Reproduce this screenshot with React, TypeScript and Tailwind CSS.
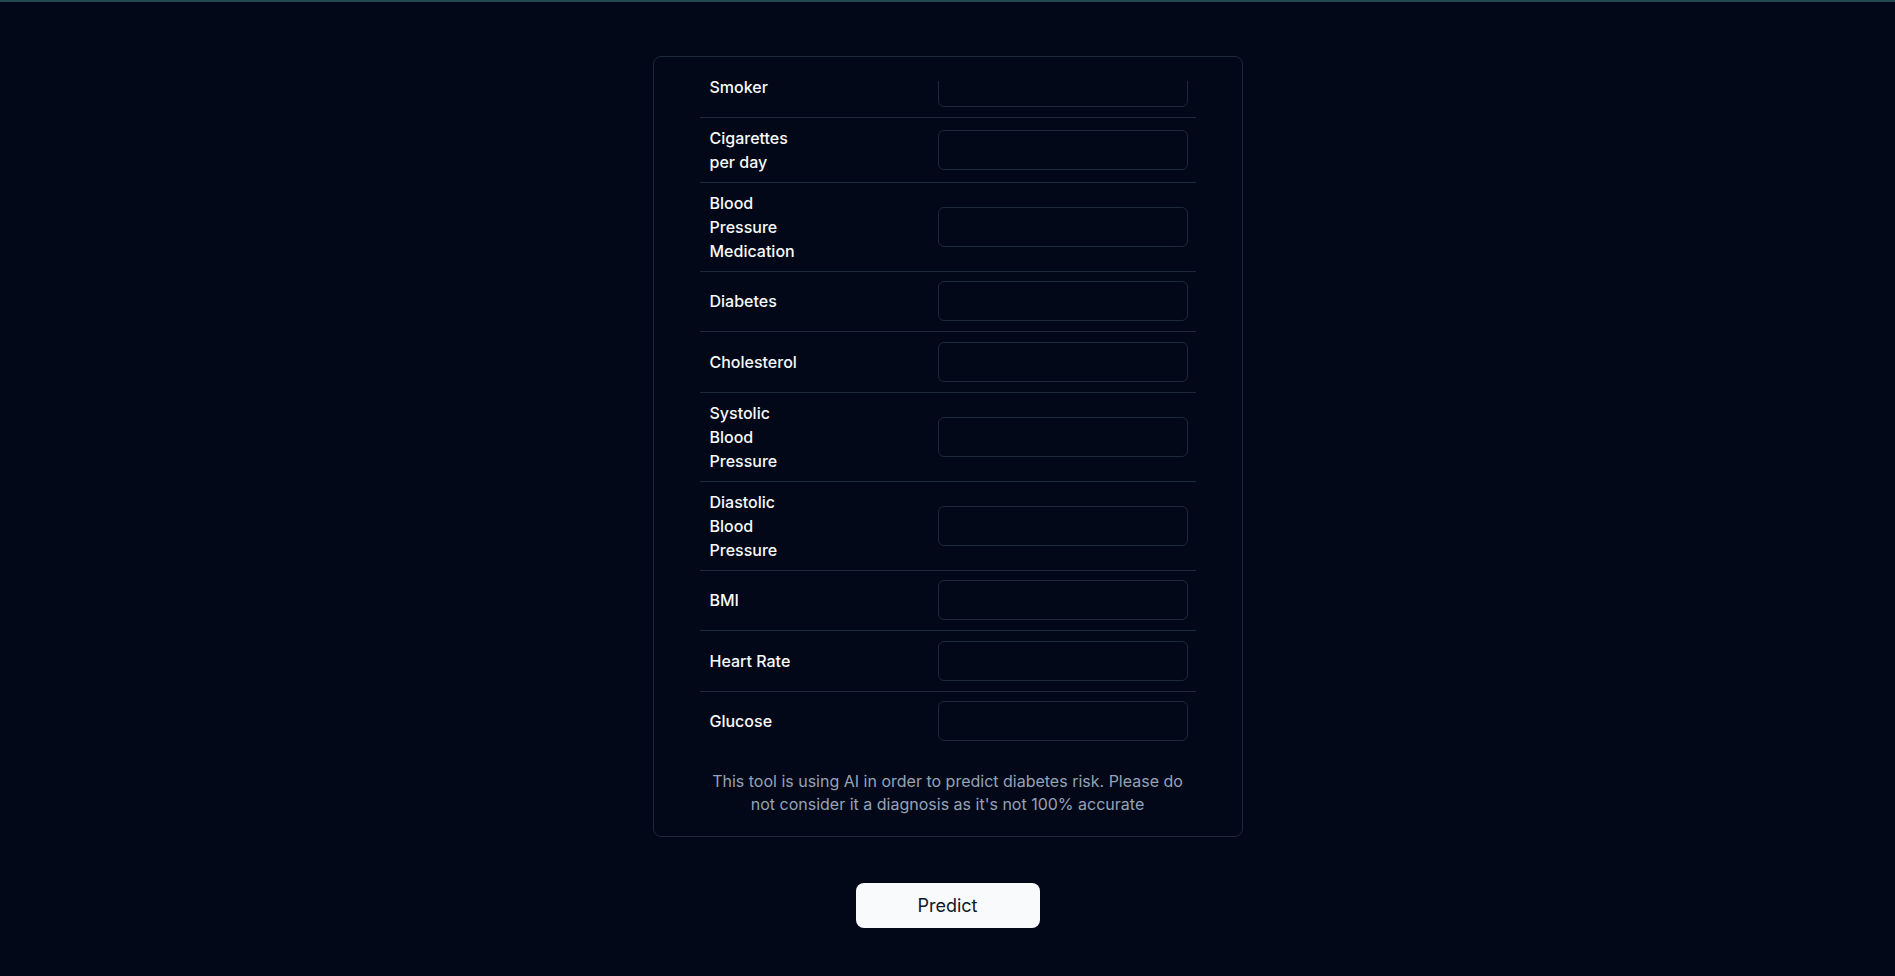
import { useEffect, useRef } from "react";

const fields = [
    { name: "currentSmoker", label: "Smoker" },
    { name: "cigsPerDay", label: "Cigarettes per day" },
    { name: "BPMeds", label: "Blood Pressure Medication" },
    { name: "diabetes", label: "Diabetes" },
    { name: "totChol", label: "Cholesterol" },
    { name: "sysBP", label: "Systolic Blood Pressure" },
    { name: "diaBP", label: "Diastolic Blood Pressure" },
    { name: "BMI", label: "BMI" },
    { name: "heartRate", label: "Heart Rate" },
    { name: "glucose", label: "Glucose" },
];

export default function App() {
    const scrollRef = useRef<HTMLDivElement>(null);

    // Form list is scrolled down to the last field
    useEffect(() => {
        if (scrollRef.current) {
            scrollRef.current.scrollTop = scrollRef.current.scrollHeight;
        }
    }, []);

    return (
        <div className="min-h-screen bg-[#020817] font-['Inter',sans-serif] text-[#f8fafc]">
            <div className="h-[2px] bg-[#234a50]" />

            <main className="flex flex-col items-center pt-[54px] pb-12">
                {/* Form card */}
                <div className="w-[590px] rounded-lg border border-[#1e293b] px-[46px] pt-6 pb-5">
                    <div ref={scrollRef} className="relative h-[670px] overflow-hidden">
                        {fields.map((field) => (
                            <div
                                key={field.name}
                                className="grid grid-cols-[230px_1fr] items-center border-b border-[#1e293b] last:border-b-0"
                            >
                                <div className="py-2 pr-2 pl-[10px]">
                                    <label
                                        htmlFor={field.name}
                                        className="block max-w-[100px] text-base font-medium leading-6 text-[#f8fafc]"
                                    >
                                        {field.label}
                                    </label>
                                </div>
                                <div className="px-2 py-[9.75px]">
                                    <input
                                        id={field.name}
                                        name={field.name}
                                        type="text"
                                        className="block h-10 w-full rounded-md border border-[#1e293b] bg-transparent px-3 text-sm text-[#f8fafc] outline-none"
                                    />
                                </div>
                            </div>
                        ))}
                    </div>

                    <p className="mt-[19px] text-center text-base leading-[23px] text-[#94a3b8]">
                        This tool is using AI in order to predict diabetes risk. Please do not consider it a diagnosis as it's not 100% accurate
                    </p>
                </div>

                <button className="mt-[46px] h-[45px] w-[184px] rounded-lg bg-[#f8fafc] text-lg text-[#0f172a]">
                    Predict
                </button>
            </main>
        </div>
    );
}
